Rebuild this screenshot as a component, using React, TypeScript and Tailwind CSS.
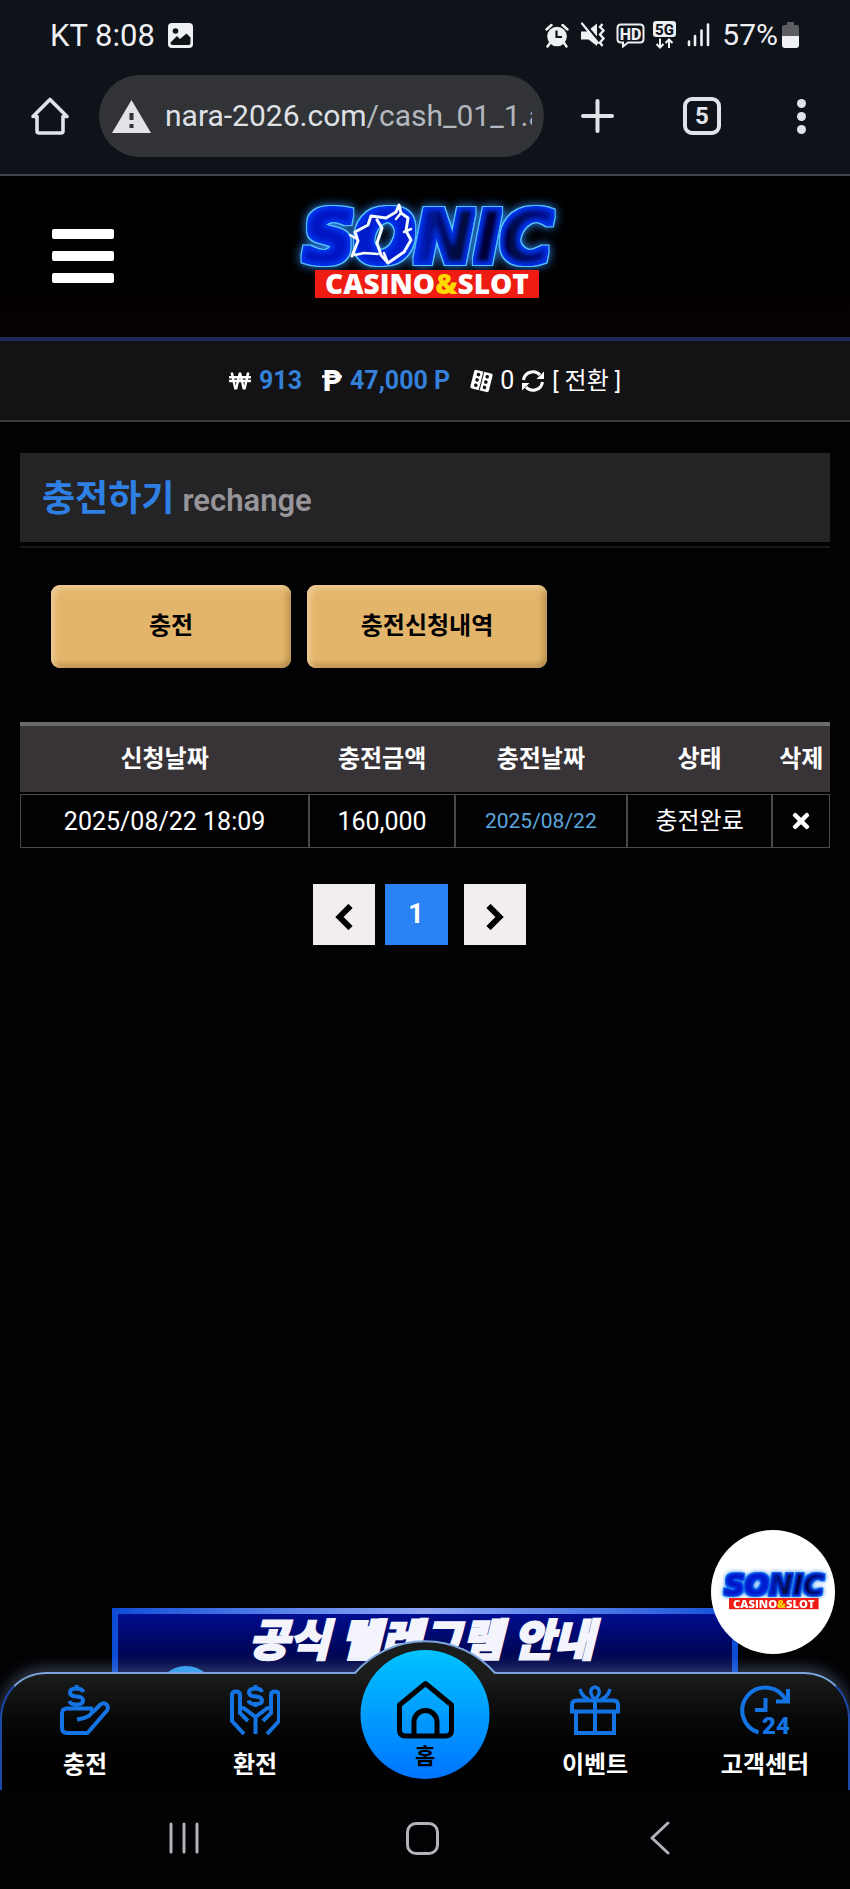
import type { ReactNode } from "react"
import { FaTimes, FaWonSign } from "react-icons/fa"

const headers = ["신청날짜", "충전금액", "충전날짜", "상태", "삭제"]

const rows = [
  { requested: "2025/08/22 18:09", amount: "160,000", charged: "2025/08/22", status: "충전완료" },
]

function StatusBar() {
  return (
    <div className="flex h-[60px] items-center justify-between pt-[10px] pl-[50px] pr-[51px] text-[31px] leading-none text-[#eef0f4]">
      <div className="flex items-center gap-[13px]">
        <span>KT 8:08</span>
        <svg width="25" height="25" viewBox="0 0 25 25" aria-hidden="true">
          <rect width="25" height="25" rx="4" fill="currentColor" />
          <circle cx="7.5" cy="8" r="2.8" fill="#0e1219" />
          <path d="M2.500 19.500 L9 13 L12 16 L18.500 10.500 L22.500 14.500 V20 Q22.500 22 20.500 22 H4.500 Q2.500 22 2.500 19.500 Z" fill="#0e1219" />
        </svg>
      </div>
      <div className="flex items-center">
        <svg width="24" height="25" viewBox="0 0 24 25" aria-hidden="true">
          <circle cx="12" cy="13.500" r="9.800" fill="currentColor" />
          <path d="M1.500 6.500 L6.500 2 M22.500 6.500 L17.500 2 M5 20 L2.500 23.500 M19 20 L21.500 23.500" stroke="currentColor" strokeWidth="2.500" strokeLinecap="round" />
          <path d="M11.500 7.500 V14 H17" stroke="#0e1219" strokeWidth="2.200" fill="none" />
        </svg>
        <svg className="ml-[11px]" width="26" height="26" viewBox="0 0 26 26" aria-hidden="true">
          <path d="M1 9.500 H7 L17 1.500 V24 L8.500 17.500 H1 Z" fill="currentColor" />
          <path d="M4 1 L20 20" stroke="#0e1219" strokeWidth="2.500" />
          <path d="M2 1.500 L18 21" stroke="currentColor" strokeWidth="2.200" strokeLinecap="round" />
          <path d="M22.500 2 L20 5 L23.500 8.500 L20 12.500 L23.500 16.500 L20 20.500 L22.500 24" stroke="currentColor" strokeWidth="2.400" fill="none" />
        </svg>
        <svg className="ml-[10px]" width="29" height="25" viewBox="0 0 29 25" aria-hidden="true">
          <path d="M5 1.500 H24 Q27.500 1.500 27.500 5 V16 Q27.500 19.500 24 19.500 H12 L7 23.500 V19.500 H5 Q1.500 19.500 1.500 16 V5 Q1.500 1.500 5 1.500 Z" fill="none" stroke="currentColor" strokeWidth="2" />
          <text x="14.500" y="16.500" textAnchor="middle" fontSize="16" fontWeight="800" fill="currentColor">HD</text>
        </svg>
        <svg className="ml-[7px]" width="25" height="28" viewBox="0 0 25 28" aria-hidden="true">
          <rect x="1" width="23" height="16" rx="3" fill="currentColor" />
          <text x="12.500" y="13.500" textAnchor="middle" fontSize="15" fontWeight="800" fill="#0e1219">5G</text>
          <path d="M8 17.500 V26 M4.500 23 L8 26.500 L11.500 23 M17 27 V19 M13.500 22 L17 18.500 L20.500 22" stroke="currentColor" strokeWidth="2" fill="none" />
        </svg>
        <svg className="ml-[10px]" width="23" height="24" viewBox="0 0 23 24" aria-hidden="true">
          <path d="M2 18.500 V22 M8 13 V22 M14.500 7.500 V22 M21 1.500 V22" stroke="currentColor" strokeWidth="2.600" strokeLinecap="round" />
        </svg>
        <span className="ml-[12px] text-[30px]">57%</span>
        <svg className="ml-[4px]" width="17" height="26" viewBox="0 0 17 26" aria-hidden="true">
          <path d="M5 3 V0 H12 V3 H15 Q17 3 17 5 V14 H0 V5 Q0 3 2 3 Z" fill="#5c5e62" />
          <path d="M0 14 H17 V23 Q17 26 14 26 H3 Q0 26 0 23 Z" fill="currentColor" />
        </svg>
      </div>
    </div>
  )
}

function BrowserBar() {
  return (
    <div className="flex h-[116px] items-center border-b-2 border-[#45464a] pr-[41px] pb-[2px] pl-[31px] text-[#e1e3e8]">
      <button type="button" aria-label="Home">
        <svg width="38" height="38" viewBox="0 0 38 38" fill="none" stroke="currentColor" strokeWidth="3.600" strokeLinecap="round" strokeLinejoin="round">
          <path d="M2 19.500 L19 2.500 L36 19.500 H32 V34 Q32 36 30 36 H8 Q6 36 6 34 V19.500 Z" />
        </svg>
      </button>
      <div className="ml-[30px] flex h-[82px] min-w-0 flex-1 items-center rounded-full bg-[#313337] pr-3 pl-[13px]">
        <svg className="shrink-0" width="39" height="33" viewBox="0 0 39 33" aria-hidden="true">
          <path d="M19.500 0 L39 33 H0 Z" fill="currentColor" />
          <path d="M19.500 13 V20 M19.500 24 V28" stroke="#313337" strokeWidth="4" />
        </svg>
        <div className="ml-[14px] overflow-hidden text-[30px] leading-10 whitespace-nowrap text-[#b4b7be]">
          <span className="text-[#dfe1e6]">nara-2026.com</span>/cash_01_1.a
        </div>
      </div>
      <button type="button" aria-label="New tab" className="ml-[37px]">
        <svg width="33" height="34" viewBox="0 0 33 34" stroke="currentColor" strokeWidth="4" strokeLinecap="round">
          <path d="M16.500 2 V32 M2 17 H31" />
        </svg>
      </button>
      <button
        type="button"
        aria-label="Tabs"
        className="ml-[69px] flex size-[38px] items-center justify-center rounded-[9px] border-4 border-[#e1e3e8] text-[24px] leading-none font-bold"
      >
        5
      </button>
      <button type="button" aria-label="Menu" className="ml-[72px] flex w-4 flex-col items-center gap-1">
        <span className="size-[9px] rounded-full bg-[#e1e3e8]" />
        <span className="size-[9px] rounded-full bg-[#e1e3e8]" />
        <span className="size-[9px] rounded-full bg-[#e1e3e8]" />
      </button>
    </div>
  )
}

function Logo({ small = false }: { small?: boolean }) {
  const id = small ? "small" : "large"
  return (
    <svg viewBox="0 0 290 121" className={small ? "w-[116px]" : "w-[290px]"} role="img" aria-label="SONIC CASINO&SLOT">
      <defs>
        <linearGradient id={`fill-${id}`} x1="0" y1="0" x2="1" y2="0">
          <stop offset="0" stopColor="#0014c0" />
          <stop offset="0.45" stopColor="#0020d0" />
          <stop offset="0.6" stopColor="#000840" />
          <stop offset="0.8" stopColor="#000430" />
          <stop offset="1" stopColor="#0014a0" />
        </linearGradient>
        {/* glow, thin cyan rim, then the blue body around the letters */}
        <filter id={`rim-${id}`} x="-10%" y="-30%" width="120%" height="160%">
          <feMorphology in="SourceAlpha" operator="dilate" radius="4" result="outer" />
          <feGaussianBlur in="outer" stdDeviation="5" result="soft" />
          <feFlood floodColor="#2a84f0" />
          <feComposite in2="soft" operator="in" result="glow" />
          <feFlood floodColor={small ? "#1a6ce8" : "#59c6ff"} />
          <feComposite in2="outer" operator="in" result="rim" />
          <feMorphology in="SourceAlpha" operator="dilate" radius="3" result="inner" />
          <feFlood floodColor="#0634ec" />
          <feComposite in2="inner" operator="in" result="body" />
          <feGaussianBlur in="SourceGraphic" stdDeviation="2" result="core" />
          <feMerge>
            <feMergeNode in="glow" />
            <feMergeNode in="rim" />
            <feMergeNode in="body" />
            <feMergeNode in="core" />
          </feMerge>
        </filter>
      </defs>
      <text
        x="148"
        y="67"
        textAnchor="middle"
        fontFamily="DejaVu Sans, sans-serif"
        fontSize="71"
        fontWeight="700"
        fontStyle="italic"
        fill={`url(#fill-${id})`}
        filter={`url(#rim-${id})`}
      >
        SONIC
      </text>
      {!small && (
        <g fill="none" stroke="#f4faff" strokeLinejoin="round" strokeLinecap="round">
          <path d="M72 61 L78 46 L75 37 L88 30 L91 21 L106 23 L116 17 L119 10 L121 18 L128 23 L126 36 L131 45 L124 57 L108 68 L101 60 L97 48 L102 33 L97 25" strokeWidth="3" />
          <path d="M70 40 L77 44 M75 60 L84 58 L98 59 M121 18 L116 24 M131 34 L124 37 M108 68 L104 58" strokeWidth="2.500" />
        </g>
      )}
      <rect x="35" y="75" width="224" height="28" fill="#ee1c12" />
      <text x="147" y="99" textAnchor="middle" fontFamily="Open Sans, sans-serif" fontSize="28" fontWeight="800" fill="#fff">
        CASINO<tspan fill="#ffd800">&amp;</tspan>SLOT
      </text>
    </svg>
  )
}

function SiteHeader() {
  return (
    <header>
      <div className="grid h-[165px] grid-cols-[1fr_auto_1fr] items-center border-b-4 border-[#1f2856] bg-linear-to-b from-black to-[#080101] px-[52px] pb-[2px]">
        <button type="button" aria-label="메뉴" className="flex w-[62px] flex-col gap-3">
          <span className="h-[10px] rounded-[2px] bg-white" />
          <span className="h-[10px] rounded-[2px] bg-white" />
          <span className="h-[10px] rounded-[2px] bg-white" />
        </button>
        <Logo />
      </div>
      <div className="flex h-[81px] items-center justify-center border-b-2 border-[#3a3a3c] bg-[#131215] text-[25px] leading-none">
        <FaWonSign className="text-[22px]" />
        <span className="ml-2 font-bold text-[#3580d8]">913</span>
        <svg className="ml-5" width="20" height="24" viewBox="0 0 20 24" aria-hidden="true">
          <text x="1" y="22" fontSize="29" fontWeight="900" fill="#fff">P</text>
          <path d="M0 7.500 H20" stroke="#fff" strokeWidth="2.500" />
        </svg>
        <span className="ml-2 font-bold text-[#3580d8]">47,000 P</span>
        <svg className="ml-5" width="23" height="24" viewBox="0 0 23 24" aria-hidden="true">
          <g transform="rotate(14 11.500 12)">
            <rect x="2" y="2.500" width="19" height="19" rx="2" fill="#fff" />
            <path d="M11.500 2.500 V21.500" stroke="#131215" strokeWidth="1" />
            <g fill="#131215">
              <circle cx="7" cy="6.500" r="1.800" />
              <circle cx="7" cy="12" r="1.800" />
              <circle cx="7" cy="17.500" r="1.800" />
              <circle cx="16" cy="6.500" r="1.800" />
              <circle cx="16" cy="12" r="1.800" />
              <circle cx="16" cy="17.500" r="1.800" />
            </g>
          </g>
        </svg>
        <span className="ml-[7px]">0</span>
        <button type="button" className="ml-[7px] flex items-center gap-[7px] text-[24px] leading-none">
          <svg width="24" height="24" viewBox="0 0 24 24" fill="none" stroke="currentColor" strokeWidth="3" aria-hidden="true">
            <path d="M2.500 11 A9.500 9.500 0 0 1 19 6 M21.500 13 A9.500 9.500 0 0 1 5 18" />
            <path d="M23 2.500 V10 H15.500 Z M1 21.500 V14 H8.500 Z" fill="currentColor" stroke="none" />
          </svg>
          [ 전환 ]
        </button>
      </div>
    </header>
  )
}

function GoldButton({ children }: { children: ReactNode }) {
  return (
    <button
      type="button"
      className="h-[83px] w-[240px] rounded-[9px] bg-[#e3b56b] pb-[2px] text-[24px] leading-none font-bold text-black shadow-[inset_3px_3px_6px_#f0cf9a,inset_-3px_-3px_6px_#b08848]"
    >
      {children}
    </button>
  )
}

function ChargeTable() {
  const cell = "h-[54px] border border-[#4a484b] p-0"
  return (
    <table className="mt-[54px] w-full table-fixed border-separate border-spacing-0 text-center text-[24px] leading-none">
      <colgroup>
        <col className="w-[35.7%]" />
        <col className="w-[18%]" />
        <col className="w-[21.2%]" />
        <col className="w-[18%]" />
        <col className="w-[7.1%]" />
      </colgroup>
      <thead>
        <tr>
          {headers.map((label) => (
            <th key={label} className="h-[72px] border-t-4 border-b-2 border-t-[#6c696c] border-b-black bg-[#373337] p-0 font-bold whitespace-nowrap">
              {label}
            </th>
          ))}
        </tr>
      </thead>
      <tbody>
        {rows.map((row) => (
          <tr key={row.requested}>
            <td className={`${cell} text-[25px]`}>{row.requested}</td>
            <td className={`${cell} text-[25px]`}>{row.amount}</td>
            <td className={`${cell} text-[21px] text-[#5ba6dc]`}>{row.charged}</td>
            <td className={cell}>{row.status}</td>
            <td className={cell}>
              <button type="button" aria-label="삭제" className="block w-full">
                <FaTimes className="mx-auto text-[24px]" />
              </button>
            </td>
          </tr>
        ))}
      </tbody>
    </table>
  )
}

function Pagination() {
  return (
    <nav aria-label="페이지" className="mt-9 mr-3 flex h-[61px] justify-center">
      <button type="button" aria-label="이전" className="flex w-[62px] items-center justify-center bg-[#f1edf1] pt-1 text-black">
        <svg width="18" height="26" viewBox="0 0 18 26" fill="none" stroke="currentColor" strokeWidth="6" aria-hidden="true">
          <path d="M15.500 2 L4.500 13 L15.500 24" />
        </svg>
      </button>
      <button type="button" aria-current="page" className="ml-[10px] w-[63px] bg-[#2a82f5] text-[27px] leading-none font-bold">
        1
      </button>
      <button type="button" aria-label="다음" className="ml-4 flex w-[62px] items-center justify-center bg-[#f1edf1] pt-1 text-black">
        <svg width="18" height="26" viewBox="0 0 18 26" fill="none" stroke="currentColor" strokeWidth="6" aria-hidden="true">
          <path d="M2.500 2 L13.500 13 L2.500 24" />
        </svg>
      </button>
    </nav>
  )
}

function Banner() {
  return (
    <a href="#" className="mx-auto block h-16 w-[626px] max-w-full bg-linear-to-r from-[#0a4bd6] via-[#8fa8f8] to-[#0a4bd6] px-[6px] pt-[6px]">
      <div className="relative h-full overflow-hidden bg-linear-to-b from-[#000d90] to-[#00043c] pr-[7px] text-center">
        <span className="absolute top-[52px] left-[38px] size-[60px] rounded-full bg-[#2a9df0]" />
        <span className="text-[44px] leading-[54px] font-black whitespace-nowrap text-[#f4f4fc] italic [-webkit-text-stroke:2px_#f4f4fc]">
          공식 텔레그램 안내
        </span>
      </div>
    </a>
  )
}

function NavItem({ label, children }: { label: string; children: ReactNode }) {
  return (
    <a href="#" className="flex flex-col items-center pt-[11px]">
      <svg width="50" height="50" viewBox="0 0 50 50" fill="none" stroke="#1474e4" strokeWidth="4" aria-hidden="true">
        {children}
      </svg>
      <span className="mt-[18px] text-[24px] leading-6 font-bold whitespace-nowrap">{label}</span>
    </a>
  )
}

function BottomNav() {
  return (
    <nav className="relative h-[118px] rounded-t-[46px] border-x-2 border-t-2 border-x-[#1c48a8] border-t-[#7ba6dc] bg-linear-to-b from-[#1b1c1c] to-black shadow-[0_-4px_16px_rgba(150,185,225,0.35)]">
      {/* hump behind the home button */}
      <svg className="absolute -top-[34px] left-1/2 -translate-x-1/2" width="144" height="40" viewBox="0 0 144 40" aria-hidden="true">
        <path d="M2 33 A93 93 0 0 1 142 33 V40 H2 Z" fill="#1b1c1c" />
        <path d="M0 33 H2 A93 93 0 0 1 142 33 H144" fill="none" stroke="#7ba6dc" strokeWidth="2" />
      </svg>
      <div className="-mx-[2px] grid h-full grid-cols-5">
        <NavItem label="충전">
          <path d="M33 23.500 H7 Q2 23.500 2 28.500 V43 Q2 48 7 48 H27.500 L47 25.500 Q49 22 46.500 19.500 Q43.500 17 40.500 19.500 L32.500 27.500" strokeLinejoin="round" />
          <path d="M32 24 Q34 32 17 34.500" />
          <path d="M23.500 7 Q22 3.500 16.500 3.500 Q10 3.500 10 7.500 Q10 11 16.500 11.500 Q23 12 23 15.500 Q23 19.500 16.500 19.500 Q10.500 19.500 9.500 16 M16.500 0 V4 M16.500 19 V23" />
        </NavItem>
        <NavItem label="환전">
          <path d="M14 49 L2 36 V10 Q2 6.500 6 6.500 Q10 6.500 10 10 V28 L18 36 M10 23 Q13 22 15 24 L25.500 32 V49" />
          <path d="M37 49 L49 36 V10 Q49 6.500 45 6.500 Q41 6.500 41 10 V28 L33 36 M41 23 Q38 22 36 24 L25.500 32" />
          <path d="M32 7 Q31 3.500 25.500 3.500 Q19 3.500 19 7.500 Q19 11 25.500 11.500 Q32 12 32 15.500 Q32 19 25.500 19 Q19.500 19 18.500 15.500 M25.500 0 V4 M25.500 18.500 V22" />
        </NavItem>
        <div />
        <NavItem label="이벤트">
          <path d="M2 26.500 V20 Q2 15.500 6.500 15.500 H43.500 Q48 15.500 48 20 V26.500 Z M6 27 V48 H44 V27 M25 15.500 V48" />
          <path d="M25 15 Q19 8 21.500 4 Q25 0 28.500 4 Q31 8 25 15 M10 4 Q12 12 19 14.500 M40 4 Q38 12 31 14.500" strokeWidth="3.500" />
        </NavItem>
        <NavItem label="고객센터">
          <path d="M18.500 47.500 A23 23 0 1 1 46 15.500 M36 16.500 H48 V4 M25.500 13 V25 H15" />
          <text x="36" y="49" textAnchor="middle" fontSize="24" fontWeight="900" fill="#1474e4" stroke="none">24</text>
        </NavItem>
      </div>
      <a
        href="#"
        className="absolute -top-6 left-1/2 flex size-[129px] -translate-x-1/2 flex-col items-center rounded-full bg-linear-to-b from-[#00c3ff] to-[#0073ff] pt-[30px] text-black"
      >
        <svg width="60" height="60" viewBox="0 0 60 60" fill="none" stroke="currentColor" strokeWidth="5" strokeLinejoin="round" aria-hidden="true">
          <path d="M30 3.500 L56 25 V50 Q56 56 50 56 H10 Q4 56 4 50 V25 Z M18.500 56 V42 A11.500 11.500 0 0 1 41.500 42 V56" />
        </svg>
        <span className="mt-[5px] text-[22px] leading-6 font-bold">홈</span>
      </a>
    </nav>
  )
}

function SystemNav() {
  return (
    <div className="relative flex h-[99px] items-center justify-between bg-[#020103] pr-[174px] pb-[3px] pl-[168px]">
      <button type="button" aria-label="Recent apps" className="text-[#b5b2b8]">
        <svg width="32" height="32" viewBox="0 0 32 32" stroke="currentColor" strokeWidth="3" strokeLinecap="round">
          <path d="M3 2 V30 M16 2 V30 M29 2 V30" />
        </svg>
      </button>
      <button type="button" aria-label="Home screen" className="size-[33px] rounded-[10px] border-3 border-[#b5b2b8]" />
      <button type="button" aria-label="Back" className="flex w-8 justify-center text-[#b5b2b8]">
        <svg width="20" height="34" viewBox="0 0 20 34" fill="none" stroke="currentColor" strokeWidth="3" strokeLinecap="round" strokeLinejoin="round">
          <path d="M18 2 L2 17 L18 32" />
        </svg>
      </button>
    </div>
  )
}

export default function App() {
  return (
    <div className="flex min-h-screen w-full flex-col bg-[#020103] font-[Roboto,'Noto_Sans_CJK_KR',sans-serif] text-white">
      <div className="bg-[#0e1219]">
        <StatusBar />
        <BrowserBar />
      </div>
      <SiteHeader />

      <main className="flex-1 px-5 pt-[31px]">
        <div className="border-b-2 border-[#19181a] pb-1">
          <h1 className="flex h-[89px] items-baseline bg-[#242325] pt-5 pl-[22px] text-[36px] leading-[52px] font-bold text-[#2f80e4]">
            충전하기
            <span className="ml-2 text-[31px] font-semibold text-[#979599]">rechange</span>
          </h1>
        </div>
        <div className="mt-[37px] ml-[31px] flex gap-4">
          <GoldButton>충전</GoldButton>
          <GoldButton>충전신청내역</GoldButton>
        </div>
        <ChargeTable />
        <Pagination />
      </main>

      <Banner />
      <BottomNav />
      <SystemNav />

      <a
        href="#"
        aria-label="SONIC CASINO&SLOT"
        className="fixed right-[15px] bottom-[235px] flex size-[124px] items-center justify-center rounded-full bg-white"
      >
        <Logo small />
      </a>
    </div>
  )
}
